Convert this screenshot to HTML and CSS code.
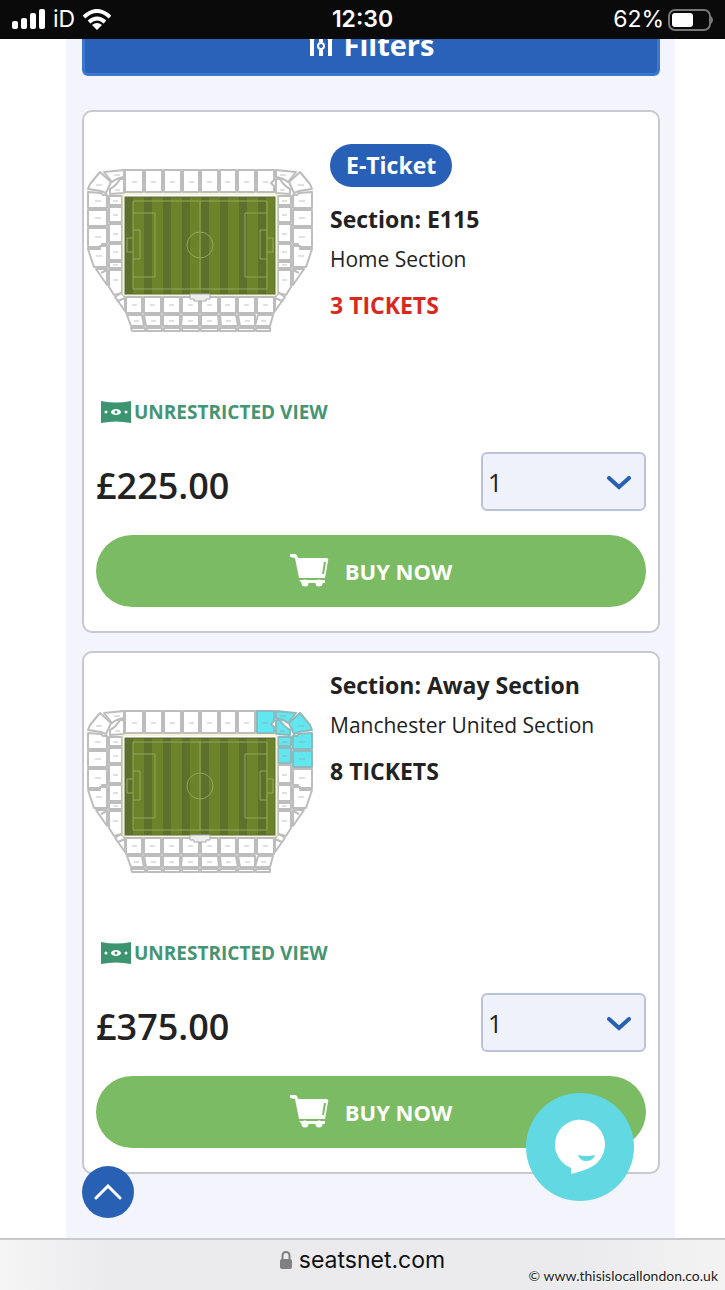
FILE: index.html
```html
<!DOCTYPE html>
<html lang="en">
<head>
<meta charset="utf-8">
<meta name="viewport" content="width=device-width, initial-scale=1">
<title>Tickets - seatsnet.com</title>
<link rel="stylesheet" href="styles.css">
</head>
<body>
<svg class="defs" aria-hidden="true">
  <defs>
    <g id="side-upper">
      <path d="M13 4 24 14 19 25 14 23 1 21 3 16Z"/>
      <path d="M17 4 37 2V9Q30 10 25 14Z"/>
      <path d="M37 11V25L23 26V21Q29 18 33 11Z"/>
      <path d="M1 24 14 25 16 27H20V40H1Z"/>
      <path d="M1 42H20V58H1Z"/>
      <path d="M22 28H35V37H22Z"/>
      <path d="M22 39H35V54H22Z"/>
      <path class="mark" d="M9 17h6M27 7h6M28 22h5M8 33h6M8 50h6M26 33h5M26 47h5"/>
    </g>
    <g id="side-lower">
      <path d="M1 60H20V76H15V79H1Z"/>
      <path d="M1 81H13V78H20V99H7Z"/>
      <path d="M9 101H20V117Z"/>
      <path d="M14 105 20 102"/>
      <path d="M22 56H35V74H22Z"/>
      <path d="M22 76H35V92H22Z"/>
      <path d="M22 94H35V100H22Z"/>
      <path d="M22 102H35V125L27 127 22 119Z"/>
      <path d="M28 129 34 125 38 129V143Z"/>
      <path d="M31 133 38 130"/>
      <path class="mark" d="M8 69h6M9 88h6M26 66h5M26 84h5M26 97h5M26 112h5"/>
    </g>
    <g id="stand-top">
      <path d="M38 2H56V24H38ZM58 2H75V24H58ZM77 2H94V24H77ZM96 2H112V24H96ZM114 2H131V24H114ZM133 2H149V24H133ZM151 2H168V24H151Z"/>
      <path class="mark" d="M45 14h5M64 14h5M83 14h5M102 14h5M120 14h5M138 14h5M157 14h5"/>
    </g>
    <g id="stand-top-end">
      <path d="M170 2H187V12L184 15 187 18V24H170Z"/>
      <path class="mark" d="M176 14h5"/>
    </g>
    <g id="stand-bottom">
      <path d="M39 129H55V145H39ZM57 129H74V145H57ZM76 129H93V145H76ZM95 129H112V145H95ZM114 129H131V145H114ZM133 129H149V145H133ZM151 129H168V145H151ZM170 129H187V145H170Z"/>
      <path d="M40 147H55L57 158H44ZM57 147H74V158H59ZM76 147H93V158H76ZM95 147H112V158H94ZM114 147H131L132 158H114ZM133 147H149L151 158H134ZM151 147H168V158H153ZM171 147H186L183 158H168Z"/>
      <path d="M44 160H58V163H45ZM60 160H75V163H60ZM77 160H93V163H77ZM95 160H112V163H95ZM114 160H131V163H114ZM133 160H149V163H133ZM151 160H167V163H151ZM169 160H183V163H169Z"/>
      <path class="mark" d="M45 137h5M63 137h5M82 137h5M101 137h5M120 137h5M138 137h5M157 137h5M176 137h5M47 153h5M64 153h5M82 153h5M101 153h5M120 153h5M139 153h5M158 153h5M174 153h5"/>
    </g>
    <pattern id="mow" width="19" height="100" patternUnits="userSpaceOnUse" x="38">
      <rect width="19" height="100" fill="#6d8329"/>
      <rect width="8" height="100" fill="#5d702c"/>
    </pattern>
    <g id="pitch">
      <rect x="36" y="26" width="154" height="101" fill="#fff" stroke="#e9ebb4"/>
      <rect x="38" y="29" width="150" height="97" fill="url(#mow)" stroke="#5b6d38"/>
      <g fill="none" stroke="#94a55b">
        <path d="M46 33H180V121H46ZM113 33V121M46 45H68V109H46M180 45H158V109H180M46 62H53V91H46M180 62H173V91H180M46 70H40V84H46M180 70H186V84H180"/>
        <circle cx="113" cy="77" r="13"/>
      </g>
      <path d="M103 126H123V131H119V133H107V131H103Z" fill="#eee" stroke="#aaa"/>
    </g>
    <symbol id="cart" viewBox="0 0 39 34">
      <path d="M0 0H5Q7 0 8 4H36Q39 4 38 7L35 24H9L5 4 0 3Z" fill="#fff"/>
      <path d="M35 8 33 20" stroke="#7bbb63" stroke-width="2"/>
      <path d="M9 26H35V29H12Z" fill="#fff"/>
      <circle cx="15" cy="29" r="3.500" fill="#fff"/><circle cx="29" cy="29" r="3.500" fill="#fff"/>
    </symbol>
    <symbol id="view" viewBox="0 0 30 22">
      <path d="M0 0Q15 3 30 0V22Q15 19 0 22Z" fill="#3c9470"/>
      <ellipse cx="15" cy="11" rx="5" ry="3" fill="#fff"/><circle cx="15" cy="11" r="1.500" fill="#3c9470"/>
      <circle cx="5" cy="11" r="1.500" fill="#fff"/><circle cx="25" cy="11" r="1.500" fill="#fff"/>
    </symbol>
  </defs>
</svg>

<header class="status">
  <div class="status-left">
    <svg width="33" height="21" viewBox="0 0 33 21" fill="#fff" aria-label="Signal"><rect y="12" width="6" height="8" rx="2"/><rect x="9" y="9" width="6" height="11" rx="2"/><rect x="18" y="4" width="6" height="16" rx="2"/><rect x="27" width="6" height="20" rx="2"/></svg>
    <span>iD</span>
    <svg width="28" height="21" viewBox="0 0 28 21" aria-label="Wi-Fi"><g fill="none" stroke="#fff" stroke-width="4"><path d="M1 8Q14 -4 27 8"/><path d="M6 13Q14 6 22 13"/></g><path d="M9 16Q14 12 19 16L14 21Z" fill="#fff"/></svg>
  </div>
  <time class="clock">12:30</time>
  <div class="status-right">
    <span>62%</span>
    <svg width="45" height="22" viewBox="0 0 45 22" aria-label="Battery"><rect x="1" y="1" width="41" height="20" rx="6" fill="none" stroke="#777" stroke-width="2"/><rect x="4" y="4" width="21" height="14" rx="3" fill="#fff"/><path d="M43 7Q47 11 43 15Z" fill="#777"/></svg>
  </div>
</header>

<main class="viewport">
  <div class="listing">
    <button class="filters" type="button">
      <svg width="26" height="24" viewBox="0 0 26 24" fill="none" stroke="#fff"><path d="M4 6V24M13 0V10M13 18V24M22 6V24" stroke-width="4"/><path d="M0 3 4 8 8 3M18 3 22 8 26 3" stroke-width="3"/><circle cx="13" cy="14" r="3" stroke-width="2"/></svg>
      <span>Filters</span>
    </button>

    <article class="card">
      <div class="summary">
        <svg class="map" viewBox="0 0 226 166" role="img" aria-label="Stadium map">
          <g class="seats"><use href="#side-upper"/><use href="#side-lower"/><use href="#stand-top"/><use href="#stand-top-end"/><use href="#stand-bottom"/>
          <g transform="translate(226 0) scale(-1 1)"><use href="#side-upper"/><use href="#side-lower"/></g></g>
          <use href="#pitch"/>
        </svg>
        <div class="info">
          <span class="pill">E-Ticket</span>
          <h2>Section: E115</h2>
          <p>Home Section</p>
          <p class="count low">3 TICKETS</p>
        </div>
      </div>
      <p class="perk"><svg width="30" height="24"><use href="#view"/></svg>UNRESTRICTED VIEW</p>
      <div class="purchase">
        <strong class="price">£225.00</strong>
        <div class="quantity">
          <select aria-label="Number of tickets"><option>1</option><option>2</option><option>3</option></select>
          <svg class="chevron" width="24" height="14" viewBox="0 0 24 14"><path d="M2 2 12 11 22 2" fill="none" stroke="#2860b4" stroke-width="4" stroke-linecap="round"/></svg>
        </div>
      </div>
      <button class="buy" type="button"><svg width="39" height="34"><use href="#cart"/></svg>BUY NOW</button>
    </article>

    <article class="card">
      <div class="summary">
        <svg class="map" viewBox="0 0 226 166" role="img" aria-label="Stadium map, away section highlighted">
          <g class="seats"><use href="#side-upper"/><use href="#side-lower"/><use href="#stand-top"/><use href="#stand-bottom"/>
          <use href="#side-lower" transform="translate(226 0) scale(-1 1)"/></g>
          <g class="seats away"><use href="#stand-top-end"/><use href="#side-upper" transform="translate(226 0) scale(-1 1)"/></g>
          <use href="#pitch"/>
        </svg>
        <div class="info">
          <h2>Section: Away Section</h2>
          <p>Manchester United Section</p>
          <p class="count">8 TICKETS</p>
        </div>
      </div>
      <p class="perk"><svg width="30" height="24"><use href="#view"/></svg>UNRESTRICTED VIEW</p>
      <div class="purchase">
        <strong class="price">£375.00</strong>
        <div class="quantity">
          <select aria-label="Number of tickets"><option>1</option><option>2</option><option>3</option></select>
          <svg class="chevron" width="24" height="14" viewBox="0 0 24 14"><path d="M2 2 12 11 22 2" fill="none" stroke="#2860b4" stroke-width="4" stroke-linecap="round"/></svg>
        </div>
      </div>
      <button class="buy" type="button"><svg width="39" height="34"><use href="#cart"/></svg>BUY NOW</button>
    </article>
  </div>

  <button class="to-top" type="button" aria-label="Back to top"><svg width="28" height="16" viewBox="0 0 28 16"><path d="M2 14 14 2 26 14" fill="none" stroke="#fff" stroke-width="3" stroke-linecap="round"/></svg></button>
  <button class="chat" type="button" aria-label="Chat"><svg width="52" height="56" viewBox="0 0 52 56"><path d="M17 55V49A25 25 0 1 1 39 47Q33 51 17 55Z" fill="#fff"/><path d="M24 36Q32 38 41 36 39 42 32 42 26 42 24 36Z" fill="#62d9e2"/></svg></button>
</main>

<footer class="browser-bar">
  <a class="address" href="#"><svg width="12" height="18" viewBox="0 0 12 18"><rect y="8" width="12" height="10" rx="2" fill="#808080"/><path d="M2.500 9V5Q2.500 1 6 1T9.500 5V9" fill="none" stroke="#808080" stroke-width="2"/></svg>seatsnet.com</a>
  <small class="credit">© www.thisislocallondon.co.uk</small>
</footer>
</body>
</html>
```
FILE: styles.css
```css
* { box-sizing: border-box; }
body {
  margin: 0;
  min-height: 100vh;
  display: flex;
  flex-direction: column;
  background: #fff;
  color: #222;
  font-family: "Open Sans", "Noto Sans", sans-serif;
  font-size: 20px;
}
h2, p { margin: 0; }
button { border: 0; padding: 0; color: #fff; font-family: inherit; cursor: pointer; }
.defs { position: absolute; width: 0; height: 0; }

.status {
  display: grid;
  grid-template-columns: 1fr auto 1fr;
  align-items: center;
  height: 39px;
  padding: 0 12px;
  background: #0a0a0a;
  color: #fff;
  font: 23px/39px Inter, sans-serif;
}
.status-left, .status-right { display: flex; align-items: center; }
.status-left { gap: 8px; }
.status-right { justify-content: flex-end; gap: 4px; }
.clock { font-weight: 600; }

.viewport {
  position: relative;
  flex: 1;
  display: flex;
  overflow: hidden;
  padding: 0 50px 0 66px;
}
.listing {
  flex: 1;
  display: flex;
  flex-direction: column;
  gap: 18px;
  padding: 0 15px 60px 16px;
  background: #f4f5fc;
}
.filters {
  display: flex;
  align-items: center;
  justify-content: center;
  gap: 10px;
  height: 64px;
  margin: -27px 0 16px;
  border: 3px solid #3a78d0;
  border-radius: 6px;
  background: #2962b8;
  font-size: 29px;
  font-weight: 700;
}

.card {
  padding: 0 12px 24px;
  border: 2px solid #c8c8ce;
  border-radius: 10px;
  background: #fff;
}
.summary {
  display: flex;
  gap: 17px;
  min-height: 284px;
  margin-left: -9px;
}
.map { flex: none; width: 226px; height: 166px; margin-top: 56px; }
.seats { fill: #fff; stroke: #bdbdbd; stroke-width: 2; stroke-linejoin: round; }
.away { fill: #62e6f0; stroke: #8fb9bd; }
.mark { stroke: #999; stroke-width: 1; opacity: 0.6; }
.info { padding-top: 12px; line-height: 40px; }
.info h2 { font-size: 23px; font-weight: 700; }
.info p { font-size: 21px; }
.info .count { margin-top: 6px; font-size: 23px; font-weight: 700; }
.info .low { color: #d9291f; }
.pill {
  display: block;
  width: fit-content;
  margin: 20px 0 12px;
  padding: 0 16px;
  border-radius: 22px;
  background: #2860b8;
  color: #fff;
  font-size: 23px;
  font-weight: 700;
  line-height: 43px;
}
.perk {
  display: flex;
  align-items: center;
  gap: 3px;
  padding-left: 5px;
  color: #459574;
  font-size: 19px;
  font-weight: 700;
  line-height: 32px;
}
.purchase {
  display: flex;
  align-items: center;
  justify-content: space-between;
  margin: 24px 0;
}
.price { font-size: 36px; font-weight: 600; line-height: 51px; padding-top: 8px; }
.quantity { position: relative; width: 30%; }
.quantity select {
  appearance: none;
  display: block;
  width: 100%;
  height: 59px;
  padding: 0 5px;
  border: 2px solid #bcc2da;
  border-radius: 6px;
  background: #eff2fa;
  color: #222;
  font: 25px "Open Sans", sans-serif;
}
.chevron { position: absolute; right: 15px; top: 24px; pointer-events: none; }
.buy {
  display: flex;
  align-items: center;
  justify-content: center;
  gap: 16px;
  width: 100%;
  height: 72px;
  border-radius: 36px;
  background: #7bbb63;
  font-size: 22px;
  font-weight: 700;
}

.to-top, .chat {
  position: absolute;
  display: grid;
  place-items: center;
  border-radius: 50%;
}
.to-top { left: 82px; bottom: 20px; width: 52px; height: 52px; background: #2860b4; }
.chat { right: 91px; bottom: 37px; width: 108px; height: 108px; background: #62d9e2; }

.browser-bar {
  position: relative;
  height: 52px;
  border-top: 2px solid #c9c9cb;
  background: linear-gradient(90deg, #f5f5f5, #ebebee 15%, #ebebee 80%, #f3f3f3);
  text-align: center;
}
.address {
  display: inline-flex;
  align-items: center;
  gap: 7px;
  color: #111;
  font: 23px/40px Inter, sans-serif;
  text-decoration: none;
}
.credit {
  position: absolute;
  right: 7px;
  bottom: 5px;
  color: #222;
  font: 14px/18px Lato, sans-serif;
  text-shadow: 1px 1px 0 #fff;
}
```
